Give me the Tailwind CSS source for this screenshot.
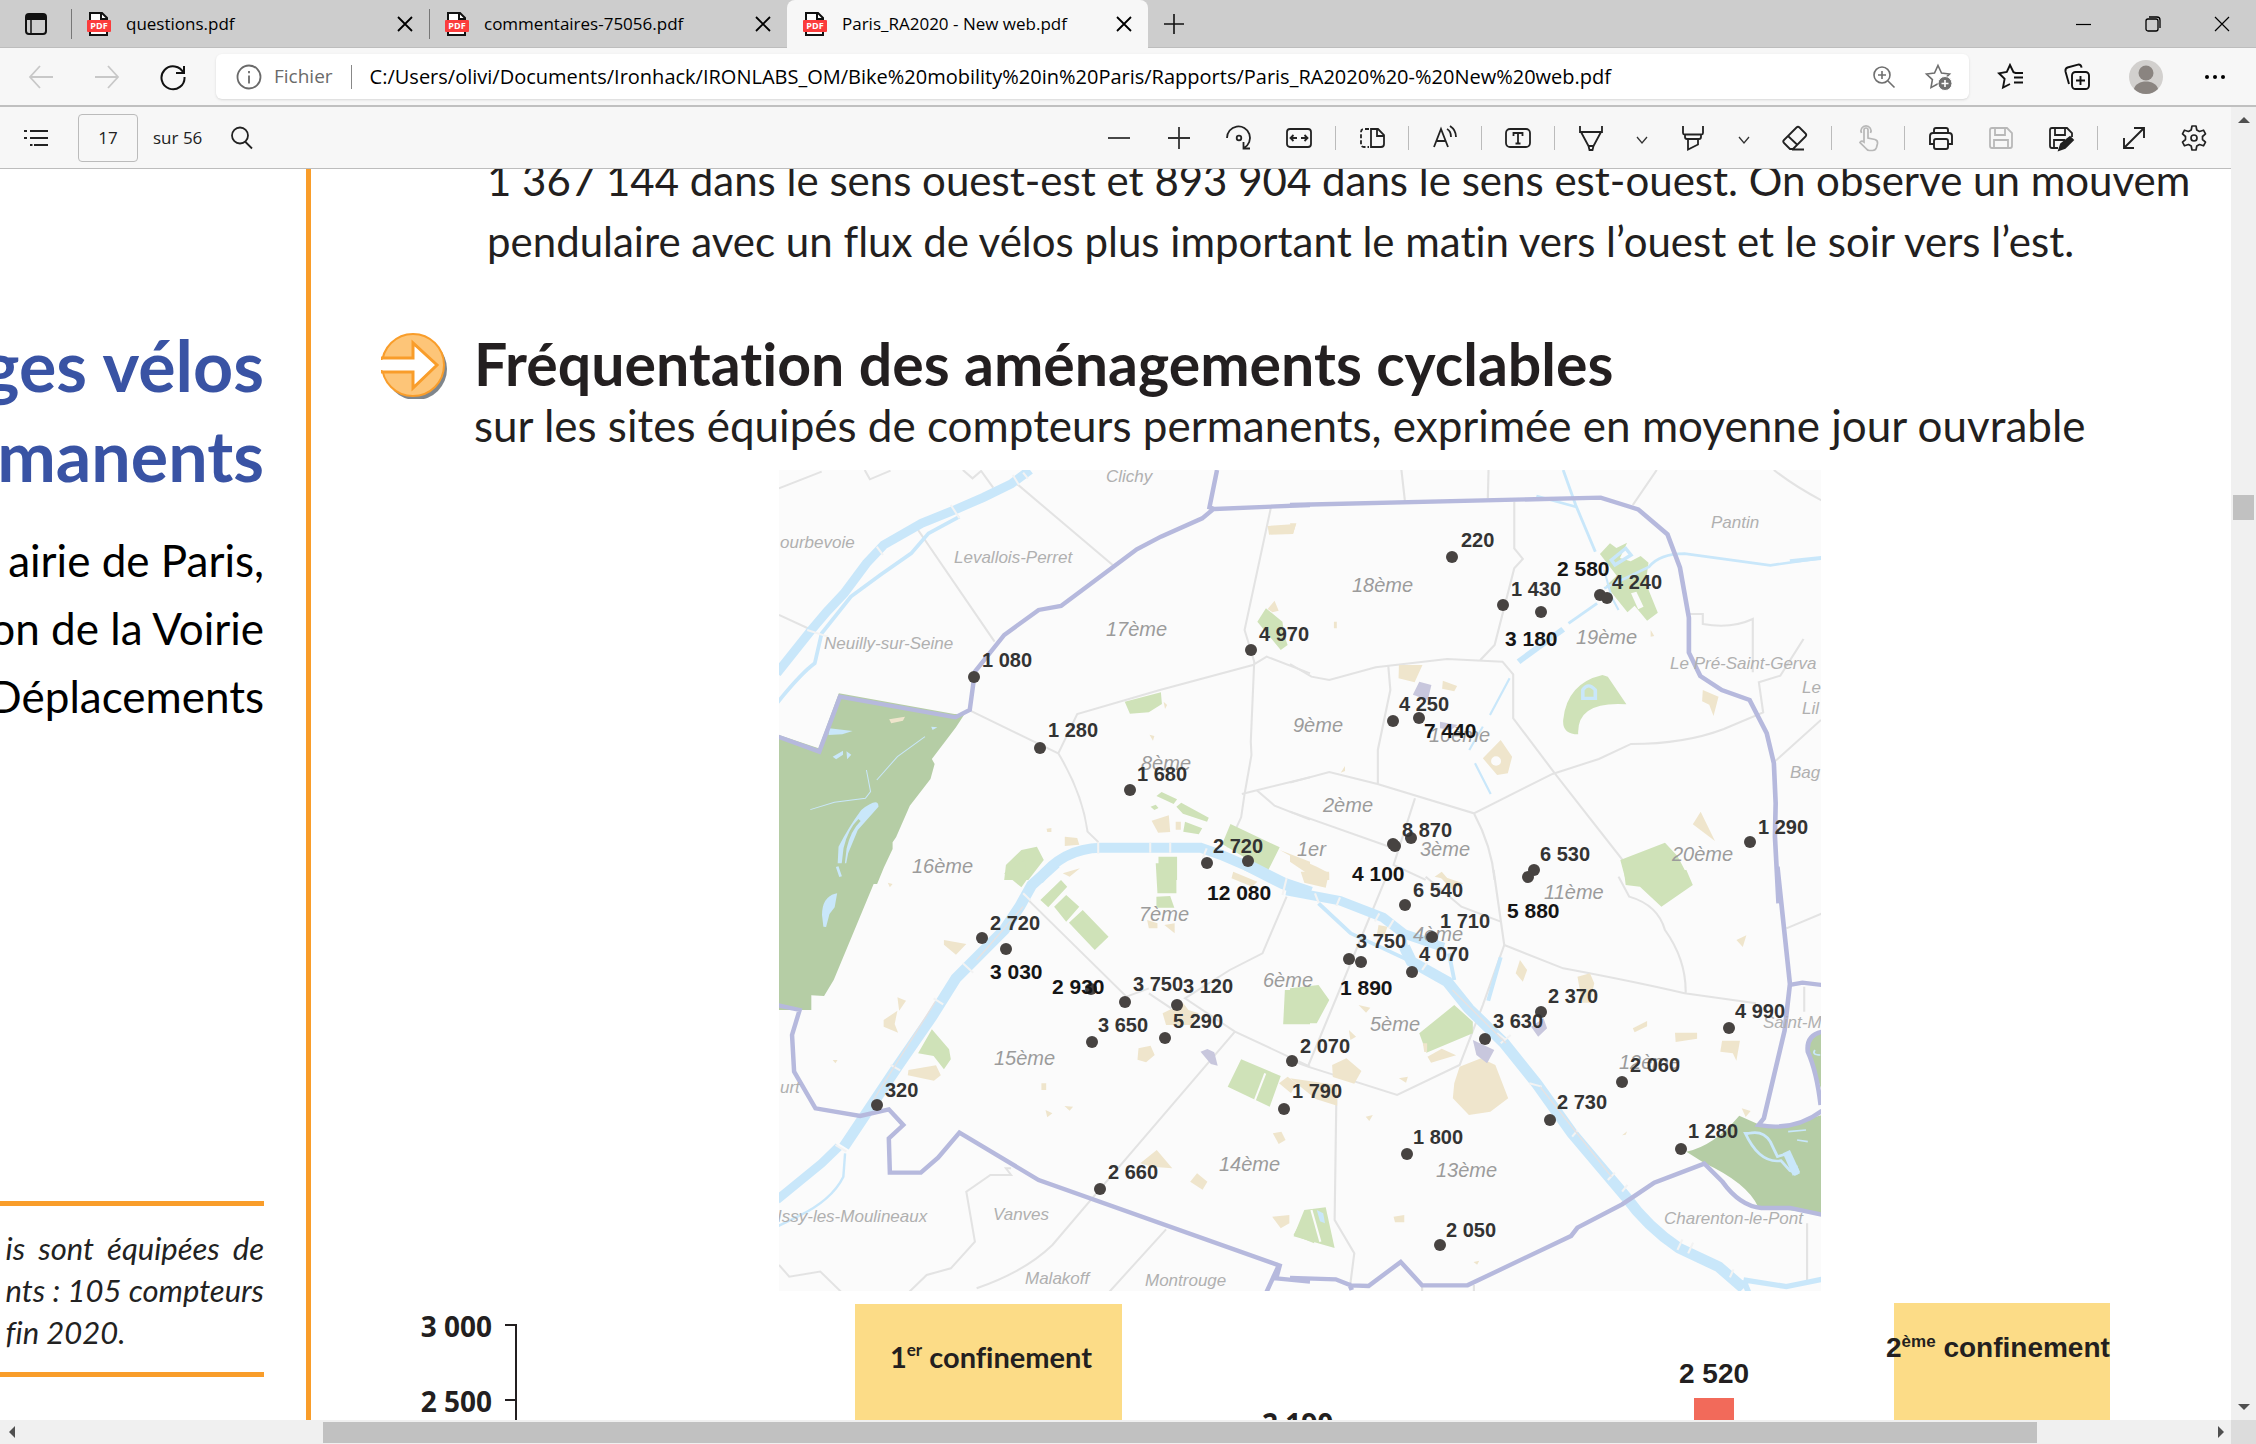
<!DOCTYPE html>
<html lang="fr">
<head>
<meta charset="utf-8">
<title>Paris_RA2020 - New web.pdf</title>
<script src="https://cdn.jsdelivr.net/npm/@tailwindcss/browser@4"></script>
</head>
<body class="h-screen flex flex-col overflow-hidden bg-white text-black font-['Open_Sans','Noto_Sans',sans-serif]">

<svg class="hidden" aria-hidden="true">
  <symbol id="pdf" viewBox="0 0 24 24">
    <path d="M3 1h12l5 5v17H3z" fill="#fff" stroke="#111" stroke-width="2"/>
    <path d="M14 1v6h6" fill="none" stroke="#111" stroke-width="2"/>
    <rect x="0" y="8" width="24" height="12" rx="1" fill="#fb3c3c"/>
    <text x="12" y="17" text-anchor="middle" font-size="9" font-weight="700" fill="#fff" font-family="Open Sans, sans-serif">PDF</text>
  </symbol>
  <symbol id="x" viewBox="0 0 24 24"><path d="M5 5l14 14M19 5L5 19" fill="none" stroke="currentColor" stroke-width="1.8"/></symbol>
</svg>

<!-- Tab strip -->
<header class="h-12 shrink-0 flex bg-[#cdcdcd] border-b border-[#bdbdbd]">
  <button class="w-[71px] flex items-center justify-center" aria-label="Onglets verticaux">
    <svg class="size-6" viewBox="0 0 24 24"><rect x="2" y="2" width="20" height="20" rx="3" fill="none" stroke="#111" stroke-width="2"/><path d="M2 3h20v5H2z" fill="#111"/><path d="M7 8v14" stroke="#111" stroke-width="1.5"/></svg>
  </button>
  <nav class="flex" aria-label="Onglets">
    <div class="w-[358px] flex items-center pr-3">
      <span class="w-px h-[30px] bg-[#777] mr-[15px]"></span>
      <svg class="size-6"><use href="#pdf"/></svg>
      <a href="#" class="ml-[15px] flex-1 text-[17px]">questions.pdf</a>
      <button aria-label="Fermer" class="size-6"><svg class="size-6"><use href="#x"/></svg></button>
    </div>
    <div class="w-[358px] flex items-center pr-3">
      <span class="w-px h-[30px] bg-[#777] mr-[15px]"></span>
      <svg class="size-6"><use href="#pdf"/></svg>
      <a href="#" class="ml-[15px] flex-1 text-[17px]">commentaires-75056.pdf</a>
      <button aria-label="Fermer" class="size-6"><svg class="size-6"><use href="#x"/></svg></button>
    </div>
    <div class="w-[361px] h-12 flex items-center pr-3 pl-4 bg-[#f7f7f7] rounded-t-lg">
      <svg class="size-6"><use href="#pdf"/></svg>
      <a href="#" class="ml-[15px] flex-1 text-[17px]">Paris_RA2020 - New web.pdf</a>
      <button aria-label="Fermer" class="size-6"><svg class="size-6"><use href="#x"/></svg></button>
    </div>
  </nav>
  <button class="w-[52px] flex items-center justify-center" aria-label="Nouvel onglet"><svg class="size-6" viewBox="0 0 24 24"><path d="M12 2v20M2 12h20" stroke="#111" stroke-width="1.6"/></svg></button>
  <div class="ml-auto flex">
    <button class="w-[69px] flex items-center justify-center" aria-label="Réduire"><svg class="size-4" viewBox="0 0 16 16"><path d="M0 8.500h15" stroke="#000" stroke-width="1.2"/></svg></button>
    <button class="w-[69px] flex items-center justify-center" aria-label="Restaurer"><svg class="size-4" viewBox="0 0 16 16"><rect x="1" y="3" width="12" height="12" rx="2" fill="none" stroke="#000" stroke-width="1.3"/><path d="M4 1h8q3 0 3 3v8" fill="none" stroke="#000" stroke-width="1.3"/></svg></button>
    <button class="w-[69px] flex items-center justify-center" aria-label="Fermer la fenêtre"><svg class="size-4" viewBox="0 0 16 16"><path d="M1 1l14 14M15 1L1 15" stroke="#000" stroke-width="1.2"/></svg></button>
  </div>
</header>

<!-- Address row -->
<div class="h-[59px] shrink-0 flex items-center bg-[#f7f7f7] border-b-2 border-[#c0c0c0] pl-2">
  <button class="w-[66px] flex justify-center" aria-label="Précédent"><svg class="size-7" viewBox="0 0 28 28" fill="none" stroke="#c8c8c8" stroke-width="1.8"><path d="M26 14H3M13 3L3 14l10 11"/></svg></button>
  <button class="w-[66px] flex justify-center" aria-label="Suivant"><svg class="size-7" viewBox="0 0 28 28" fill="none" stroke="#c8c8c8" stroke-width="1.8"><path d="M2 14h23M15 3l10 11-10 11"/></svg></button>
  <button class="w-[66px] flex justify-center" aria-label="Actualiser"><svg class="size-7" viewBox="0 0 28 28" fill="none" stroke="#111" stroke-width="2"><path d="M24.500 10A11.500 11.500 0 1 0 25.500 14M25 3v7h-8"/></svg></button>
  <div class="flex-1 ml-[10px] mr-[9px] h-[45px] flex items-center rounded-md bg-white shadow-sm pl-[20px] pr-1">
    <svg class="size-[26px]" viewBox="0 0 26 26" fill="none" stroke="#6a6a6a" stroke-width="1.800"><circle cx="13" cy="13" r="11.500"/><path d="M13 11.500v8M13 7v2.200"/></svg>
    <label for="url" class="ml-3 text-[19px] text-[#6a6a6a]">Fichier</label>
    <span class="w-px h-6 bg-[#888] mx-[18px]"></span>
    <input id="url" class="flex-1 text-[20px] outline-none" value="C:/Users/olivi/Documents/Ironhack/IRONLABS_OM/Bike%20mobility%20in%20Paris/Rapports/Paris_RA2020%20-%20New%20web.pdf">
    <button aria-label="Zoom" class="w-[54px] flex justify-center"><svg class="size-6" viewBox="0 0 24 24" fill="none" stroke="#6f6f6f" stroke-width="1.600"><circle cx="10" cy="10" r="8"/><path d="M16 16l6.500 6.500M10 6v8M6 10h8"/></svg></button>
    <button aria-label="Ajouter aux favoris" class="w-[54px] flex justify-center"><svg class="size-7" viewBox="0 0 28 28"><path d="M14 2.500l3.500 7.500 8 1-5.900 5.600 1.500 8L14 20.700 7 24.600l1.400-8L2.500 11l8-1z" fill="none" stroke="#6f6f6f" stroke-width="1.600"/><circle cx="21" cy="20.500" r="7" fill="#6f6f6f" stroke="#fff"/><path d="M21 17v7M17.500 20.500h7" stroke="#fff" stroke-width="1.600"/></svg></button>
  </div>
  <button aria-label="Favoris" class="w-[66px] flex justify-center"><svg class="size-7" viewBox="0 0 28 28" fill="none" stroke="#111" stroke-width="1.900"><path d="M25 10h-6.500l-2-.8L13 2 9.800 9 2 10.300l5.600 5.500L6 24.600l7-3.600M17 14.500h9M17 19.500h9M19 10h7"/></svg></button>
  <button aria-label="Collections" class="w-[66px] flex justify-center"><svg class="size-7" viewBox="0 0 28 28" fill="none" stroke="#111" stroke-width="1.900"><rect x="9" y="9" width="17" height="17" rx="3.500"/><path d="M17.500 13v9M13 17.500h9M6 21L2.500 8.500q-.5-3 2-4L15 1.600q3-.4 3.600 3"/></svg></button>
  <button aria-label="Profil" class="w-[72px] flex justify-center"><svg class="size-[34px]" viewBox="0 0 34 34"><circle cx="17" cy="17" r="17" fill="#d2d0ce"/><circle cx="17" cy="13" r="7.500" fill="#8a8480"/><path d="M5 29c2-10 22-10 24 0a17 17 0 0 1-24 0z" fill="#8a8480"/></svg></button>
  <button aria-label="Paramètres et plus" class="w-[66px] mr-2 flex justify-center"><svg class="size-6" viewBox="0 0 24 24"><circle cx="4" cy="12" r="2"/><circle cx="12" cy="12" r="2"/><circle cx="20" cy="12" r="2"/></svg></button>
</div>

<div class="flex-1 min-h-0 flex">
  <div class="flex-1 min-w-0 flex flex-col">

    <!-- PDF toolbar -->
    <div class="h-[62px] shrink-0 flex items-center bg-[#f7f7f7] border-b border-[#bdbdbd] text-[#222]">
      <button aria-label="Table des matières" class="w-[72px] flex justify-center"><svg class="size-7" viewBox="0 0 28 28" stroke="#222" stroke-width="1.900"><path d="M8 7h18M8 14h18M12 21h14M2 7h3M2 14h3M8 21h2.500"/></svg></button>
      <input aria-label="Page" class="ml-[6px] w-[60px] h-12 border border-[#bbb] rounded-sm text-center text-[17px]" value="17">
      <span class="ml-[15px] text-[17px]">sur 56</span>
      <button aria-label="Rechercher" class="ml-[28px]"><svg class="size-6" viewBox="0 0 24 24" fill="none" stroke="#222" stroke-width="1.800"><circle cx="10" cy="9.500" r="8"/><path d="M15 15.500l7 7"/></svg></button>

      <div class="ml-auto mr-[7px] flex items-center">
        <button aria-label="Zoom arrière" class="w-[60px] flex justify-center"><svg class="size-6" viewBox="0 0 24 24"><path d="M1 12h22" stroke="#333" stroke-width="1.800"/></svg></button>
        <button aria-label="Zoom avant" class="w-[60px] flex justify-center"><svg class="size-6" viewBox="0 0 24 24"><path d="M1 12h22M12 1v22" stroke="#333" stroke-width="1.800"/></svg></button>
        <button aria-label="Pivoter" class="w-[60px] flex justify-center"><svg class="size-7" viewBox="0 0 28 28" fill="none" stroke="#222" stroke-width="1.800"><path d="M2 14a11.500 11.500 0 1 1 17 10M25 24.500h-6.500V18"/><circle cx="14" cy="14" r="2.300"/></svg></button>
        <button aria-label="Ajuster à la largeur" class="w-[60px] flex justify-center"><svg class="size-7" viewBox="0 0 28 28" fill="none" stroke="#222" stroke-width="1.800"><rect x="2" y="5" width="24" height="18" rx="3"/><path d="M6 14h6M22 14h-6M8.500 11L5.500 14l3 3M19.500 11l3 3-3 3"/></svg></button>
        <span class="w-px h-6 mx-[6px] bg-[#bbb]"></span>
        <button aria-label="Mode page" class="w-[60px] flex justify-center"><svg class="size-7" viewBox="0 0 28 28" fill="none" stroke="#222" stroke-width="1.800"><path d="M13 5h7l6 6v9q0 3-3 3H13zM19 5v7h7"/><path d="M11 5H6Q3 5 3 8v12q0 3 3 3h5" stroke-dasharray="4 2"/></svg></button>
        <span class="w-px h-6 mx-[6px] bg-[#bbb]"></span>
        <button aria-label="Lecture à voix haute" class="w-[60px] flex justify-center"><svg class="size-7" viewBox="0 0 28 28" fill="none" stroke="#222" stroke-width="1.800"><path d="M3 23L10 5l7 18M5.500 17h9M16 5q4 2 4 8M19 2q6 4 6 11"/></svg></button>
        <span class="w-px h-6 mx-[6px] bg-[#bbb]"></span>
        <button aria-label="Ajouter du texte" class="w-[60px] flex justify-center"><svg class="size-7" viewBox="0 0 28 28" fill="none" stroke="#222" stroke-width="1.800"><rect x="2" y="5" width="24" height="18" rx="4"/><path d="M9.500 12V9h9v3M14 9v11M11.500 19.500h5"/></svg></button>
        <span class="w-px h-6 mx-[6px] bg-[#bbb]"></span>
        <button aria-label="Dessiner" class="w-[60px] flex justify-center"><svg class="size-7" viewBox="0 0 28 28" fill="none" stroke="#222" stroke-width="1.800"><path d="M3 2v6h22V2M4 8l7.500 14h5L24 8M11.500 22l1 4h3l1-4"/></svg></button>
        <button aria-label="Options de dessin" class="w-[42px] flex justify-center"><svg class="size-3 mt-1" viewBox="0 0 12 12" fill="none" stroke="#333" stroke-width="1.300"><path d="M1 3l5 6 5-6"/></svg></button>
        <button aria-label="Surligner" class="w-[60px] flex justify-center"><svg class="size-7" viewBox="0 0 28 28" fill="none" stroke="#222" stroke-width="1.800"><path d="M4 2v7q0 1.500 1.500 1.500h17Q24 10.500 24 9V2M6 10.500V13q0 2 2 2h12q2 0 2-2v-2.500M9 15v10.500l10-5V15"/></svg></button>
        <button aria-label="Options de surlignage" class="w-[42px] flex justify-center"><svg class="size-3 mt-1" viewBox="0 0 12 12" fill="none" stroke="#333" stroke-width="1.300"><path d="M1 3l5 6 5-6"/></svg></button>
        <button aria-label="Effacer" class="w-[60px] flex justify-center"><svg class="size-7" viewBox="0 0 28 28" fill="none" stroke="#222" stroke-width="1.800"><path d="M3 16L15.500 3.500q1.500-1.500 3 0l6 6q1.500 1.500 0 3L12 25H9l-6-6q-1.500-1.500 0-3zM7 12l9.500 9M11 25.500h12"/></svg></button>
        <span class="w-px h-6 mx-[6px] bg-[#bbb]"></span>
        <button aria-label="Mode tactile" class="w-[60px] flex justify-center"><svg class="size-7" viewBox="0 0 28 28" fill="none" stroke="#b8b8b8" stroke-width="1.700"><path d="M10 17V6q0-2 2-2t2 2v8l7 1.500q3 1 2.500 4l-1 4q-1 3-4 3h-3q-2 0-3-1.500L6 18.500q1.500-2.500 4-.5zM7.500 9a5 5 0 1 1 9 0"/></svg></button>
        <span class="w-px h-6 mx-[6px] bg-[#bbb]"></span>
        <button aria-label="Imprimer" class="w-[60px] flex justify-center"><svg class="size-7" viewBox="0 0 28 28" fill="none" stroke="#222" stroke-width="1.900"><path d="M7 9V6q0-2 2-2h10q2 0 2 2v3M7 20H3v-8q0-3 3-3h16q3 0 3 3v8h-4"/><rect x="7" y="15" width="14" height="10" rx="2"/></svg></button>
        <button aria-label="Enregistrer" class="w-[60px] flex justify-center"><svg class="size-7" viewBox="0 0 28 28" fill="none" stroke="#b8b8b8" stroke-width="1.800"><path d="M3 6q0-2 2-2h15l5 5v13q0 2-2 2H5q-2 0-2-2zM8 4v7h10V4M7 24v-8h14v8"/></svg></button>
        <button aria-label="Enregistrer sous" class="w-[60px] flex justify-center"><svg class="size-7" viewBox="0 0 28 28" fill="none" stroke="#222" stroke-width="1.800"><path d="M11 24H5q-2 0-2-2V6q0-2 2-2h15l5 5v4M8 4v7h10V4M7 24v-8h11"/><path d="M12 26l2-6 9-7 3 3-8 8z" fill="#222"/></svg></button>
        <span class="w-px h-6 mx-[6px] bg-[#bbb]"></span>
        <button aria-label="Plein écran" class="w-[60px] flex justify-center"><svg class="size-7" viewBox="0 0 28 28" fill="none" stroke="#222" stroke-width="1.900"><path d="M4 24L24 4M14 4h10v10M4 14v10h10"/></svg></button>
        <button aria-label="Paramètres" class="w-[60px] flex justify-center"><svg class="size-7" viewBox="0 0 28 28" fill="none" stroke="#222" stroke-width="1.700" stroke-linejoin="round"><path d="M12 2h4l.8 4 2.700 1.500 4-1.300 2 3.600-3 2.700v3l3 2.700-2 3.600-4-1.300-2.700 1.500L16 26h-4l-.8-4-2.700-1.500-4 1.300-2-3.600 3-2.700v-3l-3-2.700 2-3.600 4 1.300L11.200 6z"/><circle cx="14" cy="14" r="3"/></svg></button>
      </div>
    </div>

    <!-- Document -->
    <div class="flex-1 min-h-0 flex overflow-hidden bg-white font-['Lato','Open_Sans',sans-serif] whitespace-nowrap [font-variant-ligatures:no-common-ligatures]">
      <aside class="w-[306px] shrink-0 pr-[42px] overflow-hidden flex flex-col items-end">
        <h2 class="mt-[151px] text-right text-[70px] leading-[90px] font-bold text-[#3953a4]">ges vélos<br>manents</h2>
        <p class="mt-[26px] text-right text-[44px] leading-[68px]">airie de Paris,<br>on de la Voirie<br>Déplacements</p>
        <div class="mt-[471px] w-full border-y-[5px] border-[#f99d2a] pt-[21px] pb-[19px] flex flex-col items-end">
          <p class="text-[31px] leading-[42px] italic text-[#222]"><span class="block [text-align-last:justify]">is sont équipées de</span>nts : 105 compteurs<br>fin 2020.</p>
        </div>
      </aside>

      <main class="flex-1 min-w-0 border-l-[5px] border-[#f99d2a] overflow-hidden text-[#231f20]">
        <p class="-mt-[19px] ml-[176px] text-[42px] leading-[61px]">1 367 144 dans le sens ouest-est et 893 904 dans le sens est-ouest. On observe un mouvem<br>pendulaire avec un flux de vélos plus important le matin vers l’ouest et le soir vers l’est.</p>
        <div class="mt-[59px] pl-[70px] flex items-start">
          <svg class="shrink-0 w-[68px] h-[68px] mr-[25px]" viewBox="0 0 68 68">
            <circle cx="35" cy="38" r="31" fill="#7f868c"/>
            <circle cx="32" cy="34" r="31" fill="#fdc578" stroke="#f99d2a" stroke-width="2"/>
            <path d="M0 27h32V12l24 22-24 23V41H0z" fill="#fff" stroke="#f99d2a" stroke-width="3"/>
            <path d="M0 29v10" stroke="#fff" stroke-width="4"/>
          </svg>
          <div>
            <h1 class="text-[59px] leading-[66px] font-bold">Fréquentation des aménagements cyclables</h1>
            <p class="text-[44px] leading-[57px]">sur les sites équipés de compteurs permanents, exprimée en moyenne jour ouvrable</p>
          </div>
        </div>

        <svg class="mt-4 ml-[468px] block w-[1042px] h-[821px] bg-[#fbfbfb]" viewBox="0 0 1042 821" fill="none" font-family="Liberation Sans, sans-serif">
          <!-- north-west -->
          <g transform="translate(-9 -10) scale(.3444 .3333)">
            <g stroke="#e3e3e3" stroke-width="6">
              <path d="M26 85L150 35M275 30l15 28 60-26M560 30l28 25 25-22 35 50M715 70l280 245M430 210l222 335M26 465l95 45M1455 140l-77 370 28 95-10 240 2 40-20 117-10 70-40 90M577 750l260 130 55-118 240-72 270-75 40-25 126 50M837 880q70 120 85 235l30 30v30M1370 1002l198-50M1415 992l50 45 103 42"/>
            </g>
            <path d="M200 700l335 62h30l-25 40-70 95 8 15-12 45-60 80-40 95-10 15v20l-25 55-20 50H26V825l115 40z" fill="#b5cda5"/>
            <g fill="#cfe2b8"><path d="M1030 725l105-28 3 35-38 25-55 4zM1440 445l48 40 5 40 10 30-20 15-68-85zM1337 1092l143 70-35 72-132-82zM1122 1008l15-12 45 22-10 14zM1180 1040l14-12 80 45-5 12-70-24zM1205 1085l50 20-10 18-45-8zM685 1215l45-45 45-10 20 40-45 60h-70zM1128 1190h54v70h-54zM1105 1040l15-6 8 10-12 6z"/></g>
            <g fill="#efe5cc"><path d="M1445 198l82-6-8 30-70 2zM1465 422l12 30-18 5-14-10zM1108 1082l50-16 4 50-35 2zM1178 1085h15v24h-15zM856 1130l36 4 6 20-42 4zM1102 824l14 4-4 14zM1143 725l10 10-6 12zM346 778l46-8-6 12-34 8zM1480 1170l88 35v15zM850 1240l50-15-30 25zM803 1106l14-2v12h-12z"/></g>
            <g fill="#c9e7fa"><path d="M172 805l68 8-30 10-40 2zM182 890l30-18v12l-20 14zM222 874l14 10-12 14zM468 800l18 2-14 8zM265 1050q50-40 50-10l-60 70-28 70-15 80h-18l5-100q30-60 66-110z"/></g>
            <path d="M260 1080q-30 30-42 85l-8 70" stroke="#b5cda5" stroke-width="9"/>
            <g stroke="#c9e7fa">
              <path d="M755 30L700 72 620 112 540 148 440 190 330 255 280 310 215 400 165 455 120 510 20 640" stroke-width="27"/>
              <path d="M550 170l-90 50-50 60-90 65-85 65-85 110-20 90Q90 640 20 730" stroke-width="11"/>
              <path d="M780 1260q70-95 180-97h290l60 22 135 60" stroke-width="30"/>
              <path d="M280 930l12 65-15 20-90 12-70 22M310 960l60-70 80-60" stroke-width="3"/>
            </g>
            <path d="M525 135l25 40M310 260l18 25M705 45l18 30M108 510l60 20M953 1145v36M1104 1148v30M1162 1148v30M1268 1165l-12 30M735 38l14 18" stroke="#f3f3f3" stroke-width="6"/>
            <path d="M1298 30l-22 112 15 5 277-12M1290 145l-35 30-120 55-70 38-220 170-65 12-100 75-85 110-15 115-42 22-335-62-60 165-120-45" stroke="#b6b9dd" stroke-width="13"/>
          </g>
          <!-- north-east -->
          <g transform="translate(511 -10) scale(.3571 .3333)">
            <g stroke="#e3e3e3" stroke-width="6">
              <path d="M312 30l10 95M556 30l-2 85M1027 30l-67 105M1355 30q60 50 135 92M628 125v140l24 32-24 28-55 230-40 45M0 612l60 38 50 10 130-38 200-25 155 8 30 38v132l120 170 95 130 95 130M275 615l6 75-35 180v100M0 968l110-32 135 36 270 88 220-118 130-45 90-45q150 0 260-45l110-50-12-90 60-20 65-110M515 1060q50 100 58 200M350 1015l-60 200 90 45M0 1055l290 110M1118 462h38v30q80 15 140-15v160M1487 780l-130 125"/>
            </g>
            <g fill="#cfe2b8"><path d="M868 282l28-32 18 14 30-16-20 46 30 10 28-16 22 20-8 60 34 90-30 24-35-45-20 20-60-80 30-30zM765 780q10-110 110-135l15 5 52 83q-140-10-135 90-45 0-42-43zM925 1200l125-52 35 40 35 72H940z"/></g>
            <path d="M820 690q15-25 35 0v25h-35zM900 300l40-35 15 20-45 30z" stroke="#c9e7fa" stroke-width="10"/>
            <path d="M955 400l15-5 20 45-15 8z" fill="#fbfbfb"/>
            <g fill="#efe5cc"><path d="M305 615h66l-22 52-45-12zM428 662l40 16-8 16-34-8zM540 895l50-55 32 50-12 50-30 5zM1156 690l44 20-14 58-12-34-20-10zM1150 1055l40 88-62-50zM1010 510l10 18-10 2zM0 190h18L8 222zM123 485h8v20h-8zM142 938l12-20v15zM0 1185l75 35 35 20v20H75L0 1205zM405 1250l20-15 20 25z"/></g>
            <path d="M362 665l34 10-10 45-42-16zM420 785l50 10-20 15-30-5z" fill="#c8c7dd"/>
            <circle cx="577" cy="903" r="14" fill="#fbfbfb"/>
            <g stroke="#c9e7fa">
              <path d="M765 30l35 105 55 140M690 108l110 32M1490 294l-145 22-240-35q-70 0-100 40L880 385M860 430l-80 60" stroke-width="8"/>
              <path d="M765 508L640 605" stroke-width="17"/><path d="M615 655L560 765M540 800l-38 70M518 910l44 92M880 330l20 80 20 40" stroke-width="6"/>
              <path d="M1490 294l-90 10" stroke-width="12"/>
            </g>
            <path d="M0 135l870-22 105 35 82 75 35 100 25 150v105l32 70 60 42 78 30 48 100 20 90 5 120-2 100 10 200" stroke="#b6b9dd" stroke-width="13"/>
          </g>
          <!-- south-west -->
          <g transform="translate(-9 400) scale(.3444 .3333)">
            <g stroke="#e3e3e3" stroke-width="6">
              <path d="M740 80l295 300 65-25M1100 370l65 45M1500 80l-70 170-95 50-130 85 145 100 166 80 52 25M1350 485L960 955l-140 170q-80 80-220 130M1150 1078l-165 188M700 895l-15 0 15 20-60 0-70 50 10 60 15 90-70 80-70 20-70 70M26 1185l30 35 90-15 60 60"/>
            </g>
            <path d="M26-20h300L185 330l-28 48-37-2v44H26z" fill="#b5cda5"/>
            <g fill="#cfe2b8"><path d="M785 90l60-60 18 20-55 62zM825 110l35-35 38 35-38 45zM868 158l40-38 75 80-40 40zM1120-20h60V70h-55zM1122 80l40-2 12 35h-52zM1495 360h73v103h-78zM1368 568l115 50-32 92-122-60zM430 550l40-72 50 60 5 30-20 30-30-40zM1520 1095l40-75h20v100zM680 10l60-40 5 60-15 22z"/></g>
            <path d="M1438 610l-30 80" stroke="#fbfbfb" stroke-width="6"/>
            <g fill="#efe5cc"><path d="M505 210l65 12-30 32-35-30zM370 382l25 10-20 30zM330 450l40-28-8 40 10 26-42-18zM402 600l80-14 14 30-20 16-76-16zM1070 535l35-8 12 28-25 22-25-8zM1140 430l60-30 15 20 30 10-25 35-70 0zM1075 880l48-40 45 55-60-5zM1220 935l20-25 30 25-14 24zM1460 790l25-5 12 25-20 12zM1478 640l25-20 25 20-15 30zM1458 1040l50-5v25l-25 15zM1095 150l30 10v15h-25zM1145 165l30-5v30zM1345 5l70 30-15 15-60-25zM800 720l20 10-15 12zM855 708l25 2-10 12zM788 640h14v20h-14zM342 38l14 4-8 10zM182 570h14l-6 10z"/></g>
            <path d="M1250 545l20-8 20 10 10 40-20-5z" fill="#c8c7dd"/>
            <path d="M195-10l10 30M190 75q-35 10-35 60l4 35 10-40 15-20z" stroke="#c9e7fa" stroke-width="8" fill="#c9e7fa"/>
            <g stroke="#c9e7fa">
              <path d="M830-20L760 45 725 110 680 180 540 325 470 440 370 590 215 830" stroke-width="32"/>
              <path d="M200 830L150 880 20 990" stroke-width="26"/>
              <path d="M218 850l-5 70Q180 990 80 1040L20 1070" stroke-width="7"/>
              <path d="M1385-15l105 55 80 28" stroke-width="36"/>
            </g>
            <path d="M735 70l22 22M560 280l30 28M475 385l28 18M350 585l28 16M190 825l32 20M1500 25l-12 50" stroke="#f3f3f3" stroke-width="6"/>
            <path d="M735 110L600 270M480 395L300 690" stroke="#e6e2e2" stroke-width="4"/>
            <path d="M20 405l66 15-22 75 6 110 62 110 130 23 83-20 42 47-42 40 3 103h90l50-45 62-75 230 142 700 257-10 38 98 10M1480 1180l-40 90" stroke="#b6b9dd" stroke-width="13"/>
          </g>
          <!-- south-east -->
          <g transform="translate(511 400) scale(.3571 .3333)">
            <g stroke="#e3e3e3" stroke-width="6">
              <path d="M270 20L50 590M380 20l100 90 110 45M570 0l30 225 165 70q200 40 340 75l200 30M600 225l-60 180-65 180-175 90-250-85L0 570M920 20l30 60q80 25 100 100 60 90 58 190M1490 130l-100 45M130 670l-5 380 55 100-12 100M1440 350v75M1448 1060v170M370 1245v20M515 1245v20"/>
            </g>
            <path d="M1490 735l-115 35-65-8-52-25q-70 90-148 108l50 34q120 60 150 130l180 24zM1490 485q-45 10-40 60l40 120z" fill="#b5cda5"/>
            <g fill="#cfe2b8"><path d="M935 0h175l18 45-88 65-60-60-40-5zM362 490l98-85 52 50v35l-130 58zM0 355l80-10 30 45-35 70H0zM40 1020l60-8 25 122-115-35z"/></g>
            <path d="M60 1020l25 95" stroke="#fbfbfb" stroke-width="6"/>
            <path d="M75 1020l18 10 5 30-14-6zM1400 895l20-10 8 25-15 8z" fill="#c9e7fa"/>
            <g fill="#efe5cc"><path d="M460 640l15-50 60-25 40 20 36 100-50 40-60 10-45-50zM118 585l40-20 42 38-20 38-60-20zM0 625l132 20v62l-60-20zM805 320l35-10 12 30-12 58h-22zM632 310l12-40 20 30-12 35zM1250 210l28-14-10 35zM960 475l40-22v16l-35 18zM1078 488h62v18l-60 10zM1210 512h50l-10 60-10-22-35-5zM385 560l40-24 40 20-70 22zM192 405l33 8-12 15zM30 5h80l-10 48-60-15zM415 15l70 25-30 20zM248 165l25 5-10 30-20-5zM305 625l25-5-5 18zM165 480l20 20-16 10zM1265 715l25 8-14 18zM290 1040l30-5v22h-26zM212 740l20-5-10 18zM372 520l12 0v26h-8zM930 796l14-12-4 10zM514 1176l16-4-6 12z"/></g>
            <path d="M512 510l60 30-20 40-30-25zM675 470l35-25 10 30-25 25z" fill="#c8c7dd"/>
            <path d="M1285 790q40-10 60 25l20 45 25-8 25 55-15-5-25-30q-60 10-100-82z" stroke="#c9e7fa" stroke-width="8"/>
            <path d="M1380 850l20-10 28 65-20 12z" fill="#c9e7fa"/>
            <path d="M1395 785l50-5M1420 810l30 5M1470 540q-10 15 15 15" stroke="#c9e7fa" stroke-width="5"/>
            <g stroke="#c9e7fa">
              <path d="M-10 62l150 30 120 50 60 50 110 40" stroke-width="28"/>
              <path d="M320 230l20 45 100 60 60 80 100 105 90 120 100 150 150 190q60 90 150 155l110 55 70 65" stroke-width="32"/>
              <path d="M80 100l90 90 170 85M320 200l10 60M445 250l15 80M590 262l-35 130" stroke-width="11"/>
              <path d="M1270 1230l120 20 100-22M1270 1230l15 40" stroke-width="16"/>
            </g>
            <path d="M70 70l10 28M140 82l-10 26M250 130l-12 24M290 150l-14 25M370 300l14-22M580 490l25 20M590 520l28-25M670 640l35 10M790 800l15-18M890 930l20-22M930 965l15-20M1085 1140l14-32M1115 1150l14-32M1232 1222l10-24" stroke="#f3f3f3" stroke-width="6"/>
            <path d="M455 360l150 160M700 650l200 270" stroke="#e6e2e2" stroke-width="4"/>
            <path d="M1365-10l35 352-15 140-58 263-15 20q100 20 178-43M1400 345l35-7 55 7M1490 485q-45 10-40 60 25 60 36 160M1490 1034l-90-20h-80q-60-5-110-80l-50-53-140 57-90 65-125 70-18 25-290 148h-127l-60-70-90 72-50-2-42-18L0 1224M165 1240l8 20" stroke="#b6b9dd" stroke-width="13"/>
          </g>

          <!-- place names -->
          <g font-style="italic" font-size="20" fill="#9b9b9b">
            <text x="327" y="166">17ème</text><text x="362" y="300">8ème</text><text x="514" y="262">9ème</text><text x="133" y="403">16ème</text>
            <text x="518" y="386">1er</text><text x="573" y="122">18ème</text><text x="797" y="174">19ème</text><text x="650" y="272">10ème</text>
            <text x="544" y="342">2ème</text><text x="641" y="386">3ème</text><text x="893" y="391">20ème</text><text x="765" y="429">11ème</text>
            <text x="634" y="471">4ème</text><text x="360" y="451">7ème</text><text x="484" y="517">6ème</text><text x="591" y="561">5ème</text>
            <text x="215" y="595">15ème</text><text x="440" y="701">14ème</text><text x="657" y="707">13ème</text><text x="840" y="599">12ème</text>
          </g>
          <g font-style="italic" font-size="17" fill="#b0b0b0">
            <text x="327" y="12">Clichy</text><text x="1" y="78">ourbevoie</text><text x="175" y="93">Levallois-Perret</text><text x="45" y="179">Neuilly-sur-Seine</text>
            <text x="932" y="58">Pantin</text><text x="891" y="199">Le Pré-Saint-Gerva</text><text x="1023" y="223">Le</text><text x="1023" y="244">Lil</text>
            <text x="1011" y="308">Bag</text><text x="984" y="558">Saint-M</text><text x="214" y="750">Vanves</text><text x="-2" y="752">Issy-les-Moulineaux</text>
            <text x="246" y="814">Malakoff</text><text x="366" y="816">Montrouge</text><text x="885" y="754">Charenton-le-Pont</text><text x="1" y="623">urt</text>
          </g>

          <!-- counters -->
          <g fill="#474341">
            <circle cx="195" cy="207" r="6"/><circle cx="261" cy="278" r="6"/><circle cx="351" cy="320" r="6"/><circle cx="472" cy="180" r="6"/>
            <circle cx="428" cy="393" r="6"/><circle cx="469" cy="391" r="6"/><circle cx="203" cy="468" r="6"/><circle cx="227" cy="479" r="6"/>
            <circle cx="312" cy="519" r="6"/><circle cx="346" cy="532" r="6"/><circle cx="398" cy="535" r="6"/><circle cx="313" cy="572" r="6"/>
            <circle cx="386" cy="568" r="6"/><circle cx="98" cy="635" r="6"/><circle cx="513" cy="591" r="6"/><circle cx="505" cy="639" r="6"/>
            <circle cx="321" cy="719" r="6"/><circle cx="673" cy="87" r="6"/><circle cx="724" cy="135" r="6"/><circle cx="762" cy="142" r="6"/>
            <circle cx="821" cy="125" r="6"/><circle cx="828" cy="128" r="6"/><circle cx="614" cy="251" r="6"/><circle cx="640" cy="248" r="6"/>
            <circle cx="632" cy="368" r="6"/><circle cx="614" cy="374" r="6"/><circle cx="616" cy="376" r="6"/><circle cx="755" cy="400" r="6"/>
            <circle cx="749" cy="407" r="6"/><circle cx="971" cy="372" r="6"/><circle cx="626" cy="435" r="6"/><circle cx="653" cy="467" r="6"/>
            <circle cx="570" cy="489" r="6"/><circle cx="582" cy="492" r="6"/><circle cx="633" cy="502" r="6"/><circle cx="762" cy="542" r="6"/>
            <circle cx="706" cy="569" r="6"/><circle cx="950" cy="558" r="6"/><circle cx="843" cy="612" r="6"/><circle cx="771" cy="650" r="6"/>
            <circle cx="902" cy="679" r="6"/><circle cx="628" cy="684" r="6"/><circle cx="661" cy="775" r="6"/>
          </g>
          <g font-weight="700" font-size="20" fill="#333">
            <text x="203" y="197">1 080</text><text x="269" y="267">1 280</text><text x="358" y="311">1 680</text><text x="480" y="171">4 970</text>
            <text x="434" y="383">2 720</text><text x="211" y="460">2 720</text><text x="354" y="521">3 750</text><text x="404" y="523">3 120</text>
            <text x="319" y="562">3 650</text><text x="394" y="558">5 290</text><text x="106" y="627">320</text><text x="521" y="583">2 070</text>
            <text x="513" y="628">1 790</text><text x="329" y="709">2 660</text><text x="682" y="77">220</text><text x="732" y="126">1 430</text>
            <text x="833" y="119">4 240</text><text x="620" y="241">4 250</text><text x="623" y="367">8 870</text><text x="761" y="391">6 530</text>
            <text x="979" y="364">1 290</text><text x="634" y="427">6 540</text><text x="661" y="458">1 710</text><text x="577" y="478">3 750</text>
            <text x="640" y="491">4 070</text><text x="769" y="533">2 370</text><text x="714" y="558">3 630</text><text x="956" y="548">4 990</text>
            <text x="851" y="602">2 060</text><text x="778" y="639">2 730</text><text x="909" y="668">1 280</text><text x="634" y="674">1 800</text>
            <text x="667" y="767">2 050</text>
          </g>
          <g font-weight="700" font-size="21" fill="#151515">
            <text x="428" y="430">12 080</text><text x="211" y="509">3 030</text><text x="273" y="524">2 930</text><text x="726" y="176">3 180</text>
            <text x="778" y="106">2 580</text><text x="645" y="268">7 440</text><text x="573" y="411">4 100</text><text x="728" y="448">5 880</text>
            <text x="561" y="525">1 890</text>
          </g>
        </svg>

        <!-- monthly traffic chart -->
        <svg class="mt-[12px] block w-[1920px] h-[117px]" viewBox="0 0 1920 117" font-weight="700" fill="#231f20">
          <rect x="544" y="1" width="267" height="116" fill="#fcdc87"/>
          <rect x="1583" y="0" width="216" height="117" fill="#fcdc87"/>
          <rect x="1383" y="95" width="40" height="22" fill="#f26a5a"/>
          <path d="M194 22h11v95M194 97h11" fill="none" stroke="#231f20" stroke-width="2"/>
          <g font-family="Open Sans, sans-serif" font-size="28">
            <text x="181" y="34" text-anchor="end">3 000</text>
            <text x="181" y="109" text-anchor="end">2 500</text>
            <text x="951" y="131">2 190</text>
          </g>
          <text x="680" y="65" text-anchor="middle" font-family="Lato, Open Sans, sans-serif" font-size="29">1<tspan dy="-12" font-size="17">er</tspan><tspan dy="12"> confinement</tspan></text>
          <g font-family="Liberation Sans, sans-serif" font-size="28">
            <text x="1368" y="80">2 520</text>
            <text x="1575" y="54">2<tspan dy="-10" font-size="17">ème</tspan><tspan dy="10"> confinement</tspan></text>
          </g>
        </svg>
      </main>
    </div>
  </div>

  <!-- vertical scroll bar -->
  <div class="w-[25px] shrink-0 flex flex-col items-center bg-[#f0f0f0]">
    <svg class="w-3 h-[26px]" viewBox="0 0 12 26"><path d="M6 10l6 6H0z" fill="#505050"/></svg>
    <div class="mt-[362px] w-[21px] h-[25px] bg-[#c1c1c1]"></div>
    <svg class="mt-auto w-3 h-[26px]" viewBox="0 0 12 26"><path d="M6 16l6-6H0z" fill="#505050"/></svg>
  </div>
</div>

<!-- horizontal scroll bar -->
<div class="h-6 shrink-0 flex items-center bg-[#f0f0f0]">
  <svg class="w-[25px] h-3" viewBox="0 0 25 12"><path d="M9 6l6-6v12z" fill="#505050"/></svg>
  <div class="ml-[298px] mr-[181px] flex-1 h-[21px] bg-[#c1c1c1]"></div>
  <svg class="w-[13px] h-3" viewBox="0 0 13 12"><path d="M6 6L0 0v12z" fill="#505050"/></svg>
  <div class="w-[25px] h-6 bg-[#dcdcdc]"></div>
</div>
</body>
</html>
